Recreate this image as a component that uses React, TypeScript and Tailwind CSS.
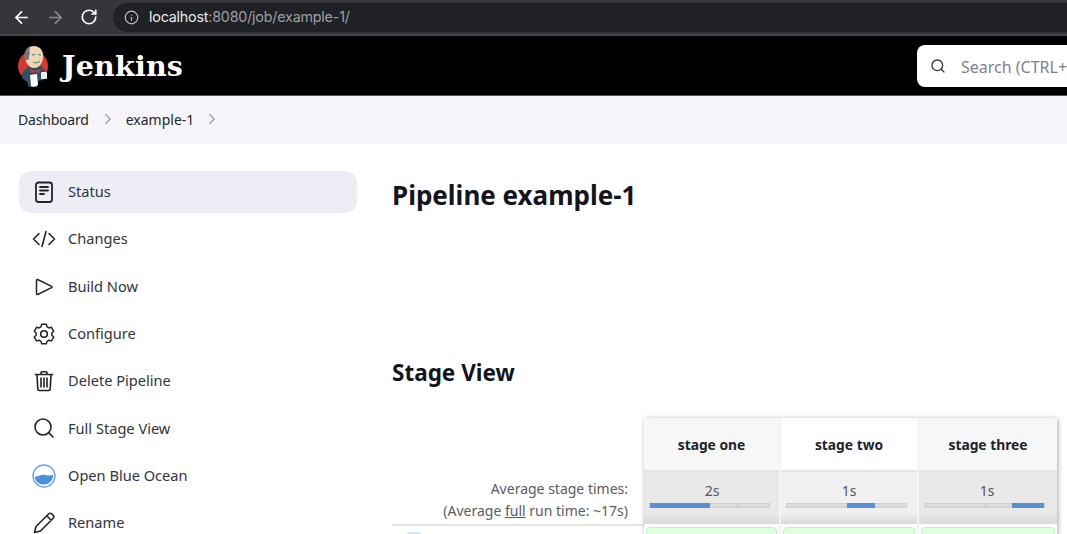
import { ArrowLeft, ArrowRight, ChevronRight, Info, RotateCw, Search } from 'lucide-react';

const sideItems = [
  { label: 'Status', icon: 'status' },
  { label: 'Changes', icon: 'changes' },
  { label: 'Build Now', icon: 'play' },
  { label: 'Configure', icon: 'gear' },
  { label: 'Delete Pipeline', icon: 'trash' },
  { label: 'Full Stage View', icon: 'search' },
  { label: 'Open Blue Ocean', icon: 'ocean' },
  { label: 'Rename', icon: 'pencil' },
];

const stages = [
  { name: 'stage one', time: '2s', left: 0, width: 50, col: 'w-[137px] border-r-2', pad: 'pr-[9px]', head: 'bg-[#f7f7f7]', cell: 'bg-[#e9e9e9]', tick: 73 },
  { name: 'stage two', time: '1s', left: 50, width: 24, col: 'w-[138px] border-r-2', pad: 'pr-[10px]', head: 'bg-white', cell: 'bg-[#f0f0f0]', tick: 0 },
  { name: 'stage three', time: '1s', left: 73, width: 27, col: 'w-[138px]', pad: 'pr-[12px]', head: 'bg-[#f7f7f7]', cell: 'bg-[#e9e9e9]', tick: 50 },
];

function SideIcon({ name }: { name: string }) {
  const cls = 'w-6 h-6 text-[#22242b]';
  if (name === 'status') {
    return (
      <svg viewBox="0 0 24 24" className={cls} fill="none" stroke="currentColor" strokeWidth="1.8" strokeLinecap="round">
        <rect x="4" y="2.500" width="16" height="19.500" rx="2.500" />
        <path d="M8 7h8M8 10.500h8M8 14h4" />
      </svg>
    );
  }
  if (name === 'changes') {
    return (
      <svg viewBox="0 0 24 24" className={cls} fill="none" stroke="currentColor" strokeWidth="1.6" strokeLinecap="round" strokeLinejoin="round">
        <path d="M7 6.500 1.500 12 7 17.500M17 6.500l5.500 5.500-5.500 5.500M14 4.500 10 19.500" />
      </svg>
    );
  }
  if (name === 'play') {
    return (
      <svg viewBox="0 0 24 24" className={cls} fill="none" stroke="currentColor" strokeWidth="1.5" strokeLinejoin="round">
        <path d="M4.500 5.200v13.600c0 .6.600 1 1.100.7l14-6.800c.5-.3.5-1 0-1.300l-14-6.900c-.5-.3-1.100.1-1.100.7Z" />
      </svg>
    );
  }
  if (name === 'gear') {
    return (
      <svg viewBox="0 0 24 24" className={cls} fill="none" stroke="currentColor" strokeWidth="1.6" strokeLinejoin="round">
        <path d="M9.500 2.500h5l.8 2.700 2.100 1.200 2.700-.7 2.400 4.200-2 2 0 2.400 2 2-2.400 4.200-2.700-.7-2.100 1.200-.8 2.700h-5l-.8-2.700-2.100-1.200-2.700.7-2.400-4.200 2-2 0-2.400-2-2 2.400-4.200 2.700.7 2.100-1.200Z" transform="translate(12 12) scale(.92) translate(-12 -13)" />
        <circle cx="12" cy="12" r="3.300" />
      </svg>
    );
  }
  if (name === 'trash') {
    return (
      <svg viewBox="0 0 24 24" className={cls} fill="none" stroke="currentColor" strokeWidth="1.6" strokeLinecap="round" strokeLinejoin="round">
        <path d="M3.500 5.500h17M9 5.500V3.800c0-.6.500-1 1-1h4c.5 0 1 .4 1 1v1.700M5 5.500l.8 14.600c0 .8.700 1.400 1.500 1.400h9.400c.8 0 1.500-.6 1.500-1.400L19 5.500M9 9v9M12 9v9M15 9v9" />
      </svg>
    );
  }
  if (name === 'search') {
    return <Search className={cls} strokeWidth={1.6} />;
  }
  if (name === 'ocean') {
    return (
      <svg viewBox="0 0 24 24" className="w-6 h-6">
        <circle cx="12" cy="12" r="11" fill="#ffffff" stroke="#6ba6e4" strokeWidth="1.400" />
        <path d="M2.800 12.800c2.800-.3 4.400-1.500 7-1.900 2.900-.4 5.200.9 8 .7 1.300-.1 2.500-.3 3.400-.8 0 5.500-4.200 9.800-9.200 9.800s-9.200-3.400-9.200-7.800Z" fill="#4a90dd" />
      </svg>
    );
  }
  return (
    <svg viewBox="0 0 24 24" className={cls} fill="none" stroke="currentColor" strokeWidth="1.600" strokeLinecap="round" strokeLinejoin="round">
      <path d="M2.500 21.500 4 15.500 16.800 2.800c.8-.8 2-.8 2.800 0l1.600 1.600c.8.8.8 2 0 2.800L8.500 20Z M14.800 4.800l4.400 4.400" />
    </svg>
  );
}

function JenkinsLogo() {
  return (
    <svg viewBox="0 0 34 42" className="w-[34px] h-[42px]">
      <circle cx="16" cy="21" r="15" fill="#d33833" />
      <path d="M5 33c0-6 3-10 8-12h10c4 2 6 6 6 10l-3 4-5 1-1 6h-8l-2-5Z" fill="#335061" />
      <path d="M8 13C7 5 12 1 17 1c6 0 10 5 9 12-1 6-4 10-9 10-4 0-8-4-9-10Z" fill="#f0d6b7" />
      <path d="M8 15C6 8 9 2 14 1c-2 3-2 5-1 7-1 2-1 4-1 6-1 1-2 1-4 1Z" fill="#77787c" />
      <path d="M15 10l3-.5M21 9.500l3 .5M16 17c2 1.500 5 1 7-1" stroke="#49728b" strokeWidth="1" fill="none" />
      <path d="M13 24l5 2 5-2-1 4-4-1-4 1Z" fill="#d33833" />
      <path d="M13 30l7-1 1 11c-2 2-6 2-7 1Z" fill="#ffffff" />
      <rect x="24" y="27" width="6" height="7" rx="1" fill="#eeeeee" />
    </svg>
  );
}

export default function App() {
  return (
    <div className="h-[534px] overflow-hidden bg-white font-['Noto_Sans',sans-serif] text-[#14141f]">
      {/* Browser chrome */}
      <div className="h-[36px] bg-[#35363a] border-b-2 border-[#46474b] flex items-center">
        <div className="w-[113px] shrink-0 flex items-center pl-[12px] gap-[15px] text-white">
          <ArrowLeft size={19} strokeWidth={2.2} />
          <ArrowRight size={19} strokeWidth={2.2} className="text-[#8a8b8e]" />
          <RotateCw size={18} strokeWidth={2.2} />
        </div>
        <div className="flex-1 h-[29px] bg-[#202124] rounded-l-full flex items-center pl-[11px] gap-[10px] text-[14.300px] font-['Inter',sans-serif] tracking-[-0.2px]">
          <Info size={15} strokeWidth={2} className="text-[#bdc1c6]" />
          <span className="text-[#e8eaed]">localhost<span className="text-[#9aa0a6]">:8080/job/example-1/</span></span>
        </div>
      </div>

      {/* Jenkins header */}
      <div className="h-[60px] bg-black border-b border-[#55555a] flex items-center justify-between">
        <div className="flex items-center pl-[17px] gap-[11px]">
          <JenkinsLogo />
          <span className="text-white font-['DejaVu_Serif',serif] font-bold text-[28.500px] leading-none tracking-[0.2px] pt-[2px]">Jenkins</span>
        </div>
        <div className="w-[150px] h-[42px] bg-white rounded-l-[8px] flex items-center pl-[13px] gap-[15px] overflow-hidden whitespace-nowrap">
          <Search size={16} strokeWidth={2} className="text-[#33343a] shrink-0" />
          <span className="text-[16px] text-[#80818a] pt-[2px]">Search (CTRL+K)</span>
        </div>
      </div>

      {/* Breadcrumb */}
      <div className="h-[48px] bg-[#f5f5fa] flex items-center pl-[18px] pb-[2px] text-[14px] text-[#25262e]">
        <span className="tracking-[-0.2px]">Dashboard</span>
        <ChevronRight size={18} strokeWidth={1.6} className="text-[#9a9ba3] ml-[10px] mr-[9px]" />
        <span>example-1</span>
        <ChevronRight size={18} strokeWidth={1.6} className="text-[#9a9ba3] ml-[9px]" />
      </div>

      <div className="flex">
        {/* Sidebar */}
        <div className="w-[392px] shrink-0 pl-[19px] pr-[35px] pt-[27px] flex flex-col gap-[5.300px]">
          {sideItems.map((item, i) => (
            <div
              key={item.label}
              className={`h-[42px] shrink-0 flex items-center pl-[13px] gap-[12px] rounded-[12px] text-[14.600px] text-[#33343c] ${
                i === 0 ? 'bg-[#ecedf5]' : ''
              }`}
            >
              <SideIcon name={item.icon} />
              <span>{item.label}</span>
            </div>
          ))}
        </div>

        {/* Main content */}
        <div className="flex-1 flex flex-col">
          <h1 className="mt-[33px] text-[26px] leading-[36px] font-bold text-[#14141f]">Pipeline example-1</h1>
          <h2 className="mt-[144px] text-[22.500px] leading-[32px] font-bold text-[#14141f]">Stage View</h2>

          <div className="mt-[29px] flex items-start">
            <div className="w-[252px] shrink-0 flex flex-col">
              <div className="h-[52px]" />
              <div className="h-[54px] pr-[16px] pt-[8px] text-right text-[14px] leading-[22px] text-[#5a5b63] whitespace-nowrap">
                <div>Average stage times:</div>
                <div>
                  (Average <span className="underline">full</span> run time: ~17s)
                </div>
              </div>
              <div className="h-[2px] bg-[#e6e6e6]" />
              <div className="h-[9px] bg-white pl-[13px] overflow-hidden">
                <div className="w-[18px] h-[18px] mt-[6px] rounded-[5px] bg-[#d5e6f5]" />
              </div>
            </div>

            <div className="flex shadow-[1px_1px_5px_rgba(0,0,0,0.35)]">
              {stages.map(stage => (
                <div key={stage.name} className={`border-[#f4f4f4] ${stage.col}`}>
                  <div className={`h-[52px] pt-[2px] flex items-center justify-center font-bold text-[13.800px] text-[#22232a] ${stage.head}`}>
                    {stage.name}
                  </div>
                  <div className={`h-[54px] border-t-2 border-[#e4e4e4] pt-[8px] pl-[5px] text-center text-[14px] leading-[22px] text-[#55565e] ${stage.pad} ${stage.cell} bg-gradient-to-b from-transparent from-80% to-[#d9d9d9]`}>
                    <div className="pl-[5px]">{stage.time}</div>
                    <div className="relative h-[5px] mt-[1px] bg-[#dcdcdc] border border-[#cfcfcf]">
                      {stage.tick > 0 && (
                        <div className="absolute top-0 bottom-0 w-px bg-[#bdbdbd]" style={{ left: `${stage.tick}%` }} />
                      )}
                      <div
                        className="absolute top-[-1px] bottom-[-1px] bg-[#5b8fd3]"
                        style={{ left: `${stage.left}%`, width: `${stage.width}%` }}
                      />
                    </div>
                  </div>
                  <div className="h-[3px] bg-white" />
                  <div className="h-[20px] mx-[2px] bg-[#dfffdf] border border-[#c9efc9] rounded-t-[4px]" />
                </div>
              ))}
            </div>
          </div>
        </div>
      </div>
    </div>
  );
}
